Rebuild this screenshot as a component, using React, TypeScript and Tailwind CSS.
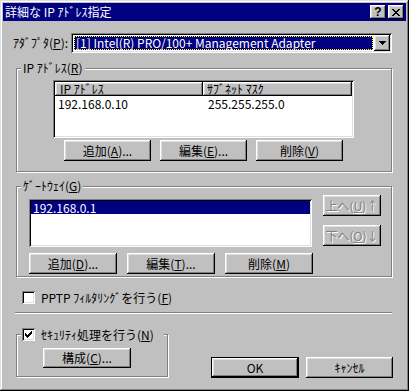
import React from "react";

const raised =
  "shadow-[inset_-1px_-1px_0_#000,inset_1px_1px_0_#fff,inset_-2px_-2px_0_#808080,inset_2px_2px_0_#dfdfdf]";
const sunken =
  "shadow-[inset_1px_1px_0_#808080,inset_-1px_-1px_0_#fff,inset_2px_2px_0_#000,inset_-2px_-2px_0_#dfdfdf]";
const etched = "border border-[#808080] shadow-[1px_1px_0_#fff,inset_1px_1px_0_#fff]";

function U({ children }: { children: React.ReactNode }) {
  return <span className="underline underline-offset-[1px]">{children}</span>;
}

function Btn({
  children,
  w,
  h = "h-[21px]",
  def = false,
  disabled = false,
}: {
  children: React.ReactNode;
  w: string;
  h?: string;
  def?: boolean;
  disabled?: boolean;
}) {
  if (def) {
    return (
      <div className={`${w} ${h} border border-black flex`}>
        <div className={`flex-1 flex items-center justify-center ${raised} bg-[#c0c0c0] leading-none`}>
          {children}
        </div>
      </div>
    );
  }
  return (
    <div
      className={`${w} ${h} flex items-center justify-center ${raised} bg-[#c0c0c0] leading-none ${
        disabled ? "text-[#808080] [text-shadow:1px_1px_0_#fff]" : ""
      }`}
    >
      {children}
    </div>
  );
}

function Check({ checked }: { checked: boolean }) {
  return (
    <div className={`w-[13px] h-[13px] bg-white ${sunken} flex items-center justify-center shrink-0`}>
      {checked && (
        <svg width="7" height="7" viewBox="0 0 7 7" shapeRendering="crispEdges">
          <rect x="6" y="0" width="1" height="1" fill="#000" />
          <rect x="5" y="1" width="2" height="1" fill="#000" />
          <rect x="0" y="2" width="1" height="1" fill="#000" />
          <rect x="4" y="2" width="3" height="1" fill="#000" />
          <rect x="0" y="3" width="2" height="1" fill="#000" />
          <rect x="3" y="3" width="3" height="1" fill="#000" />
          <rect x="0" y="4" width="5" height="1" fill="#000" />
          <rect x="1" y="5" width="3" height="1" fill="#000" />
          <rect x="2" y="6" width="1" height="1" fill="#000" />
        </svg>
      )}
    </div>
  );
}

export default function App() {
  return (
    <div
      className={`w-[409px] h-[391px] bg-[#c0c0c0] p-[3px] flex flex-col text-[12px] text-black font-['Noto_Sans_CJK_JP','Noto_Sans',sans-serif] shadow-[inset_-1px_-1px_0_#000,inset_1px_1px_0_#dfdfdf,inset_-2px_-2px_0_#808080,inset_2px_2px_0_#fff]`}
    >
      {/* Title bar */}
      <div className="h-[18px] bg-[#000080] flex items-center pl-[2px] pr-[2px]">
        <span className="text-white leading-none flex-1">詳細な IP ｱﾄﾞﾚｽ指定</span>
        <div className="flex gap-[2px]">
          <div className={`w-[16px] h-[14px] ${raised} bg-[#c0c0c0] flex items-center justify-center font-bold leading-none text-[12px] font-['Liberation_Sans',sans-serif]`}>
            ?
          </div>
          <div className={`w-[16px] h-[14px] ${raised} bg-[#c0c0c0] flex items-center justify-center`}>
            <svg width="8" height="7" viewBox="0 0 8 7" shapeRendering="crispEdges">
              <path d="M0 0h2v1H0zM6 0h2v1H6zM1 1h2v1H1zM5 1h2v1H5zM2 2h4v1H2zM3 3h2v1H3zM2 4h4v1H2zM1 5h2v1H1zM5 5h2v1H5zM0 6h2v1H0zM6 6h2v1H6z" fill="#000" />
            </svg>
          </div>
        </div>
      </div>

      {/* Adapter row */}
      <div className="mt-[12px] h-[20px] flex items-center pl-[10px]">
        <div className="w-[58px] leading-none">
          ｱﾀﾞﾌﾟﾀ(<U>P</U>):
        </div>
        <div className={`w-[321px] h-[20px] bg-white ${sunken} p-[2px] flex`}>
          <div className="flex-1 m-[1px] bg-[#000080] border border-dotted border-[#ffff00] text-white flex items-center pl-[1px] leading-none">
            [1] Intel(R) PRO/100+ Management Adapter
          </div>
          <div className={`w-[16px] h-[16px] ${raised} bg-[#c0c0c0] flex items-center justify-center`}>
            <svg width="7" height="4" viewBox="0 0 7 4" shapeRendering="crispEdges">
              <path d="M0 0h7v1H0zM1 1h5v1H1zM2 2h3v1H2zM3 3h1v1H3z" fill="#000" />
            </svg>
          </div>
        </div>
      </div>

      {/* IP address group */}
      <div className={`mt-[15px] ml-[13px] w-[376px] h-[104px] relative ${etched}`}>
        <div className="absolute left-[4px] top-[-8px] px-[2px] bg-[#c0c0c0] leading-[14px]">
          IP ｱﾄﾞﾚｽ(<U>R</U>)
        </div>
        <div className="pt-[11px] pl-[36px] flex flex-col">
          <div className={`w-[301px] h-[58px] bg-white ${sunken} p-[2px] flex flex-col`}>
            <div className="h-[14px] flex bg-[#c0c0c0]">
              <div className={`w-[148px] h-full ${raised} flex items-center pl-[5px] leading-none`}>IP ｱﾄﾞﾚｽ</div>
              <div className={`flex-1 h-full ${raised} flex items-center pl-[4px] leading-none`}>ｻﾌﾞﾈｯﾄ ﾏｽｸ</div>
            </div>
            <div className="mt-[1px] h-[13px] flex items-center leading-none">
              <div className="w-[148px] pl-[3px]">192.168.0.10</div>
              <div className="pl-[5px]">255.255.255.0</div>
            </div>
          </div>
          <div className="mt-[2px] ml-[11px] flex gap-[9px]">
            <Btn w="w-[87px]">
              追加(<U>A</U>)...
            </Btn>
            <Btn w="w-[87px]">
              編集(<U>E</U>)...
            </Btn>
            <Btn w="w-[87px]">
              削除(<U>V</U>)
            </Btn>
          </div>
        </div>
      </div>

      {/* Gateway group */}
      <div className={`mt-[14px] ml-[13px] w-[376px] h-[91px] relative ${etched}`}>
        <div className="absolute left-[4px] top-[-8px] px-[2px] bg-[#c0c0c0] leading-[14px]">
          ｹﾞｰﾄｳｪｲ(<U>G</U>)
        </div>
        <div className="pt-[8px] pl-[12px] flex">
          <div className="mt-[4px] flex flex-col">
            <div className={`w-[283px] h-[48px] bg-white ${sunken} p-[2px] flex flex-col`}>
              <div className="h-[13px] bg-[#000080] text-white flex items-center pl-[2px] leading-none">192.168.0.1</div>
            </div>
            <div className="mt-[6px] flex gap-[10px]">
              <Btn w="w-[88px]">
                追加(<U>D</U>)...
              </Btn>
              <Btn w="w-[88px]">
                編集(<U>T</U>)...
              </Btn>
              <Btn w="w-[88px]">
                削除(<U>M</U>)
              </Btn>
            </div>
          </div>
          <div className="ml-[10px] flex flex-col gap-[9px]">
            <Btn w="w-[58px]" disabled>
              上へ(<U>U</U>)↑
            </Btn>
            <Btn w="w-[58px]" disabled>
              下へ(<U>O</U>)↓
            </Btn>
          </div>
        </div>
      </div>

      {/* PPTP */}
      <div className="mt-[14px] ml-[19px] h-[13px] flex items-center">
        <Check checked={false} />
        <span className="ml-[6px] leading-none">
          PPTP ﾌｨﾙﾀﾘﾝｸﾞを行う(<U>F</U>)
        </span>
      </div>

      {/* Separator */}
      <div className="mt-[8px] ml-[12px] w-[377px] h-[2px] border-t border-t-[#808080] border-b border-b-white" />

      {/* Bottom row */}
      <div className="mt-[20px] flex items-start">
        <div className={`ml-[13px] w-[152px] h-[43px] relative ${etched}`}>
          <div className="absolute left-[4px] top-[-7px] pl-[1px] pr-[10px] bg-[#c0c0c0] flex items-center h-[13px]">
            <Check checked={true} />
            <span className="ml-[6px] leading-none">
              ｾｷｭﾘﾃｨ処理を行う(<U>N</U>)
            </span>
          </div>
          <div className="mt-[13px] ml-[26px]">
            <Btn w="w-[88px]" h="h-[20px]">
              構成(<U>C</U>)...
            </Btn>
          </div>
        </div>
        <div className="ml-[43px] mt-[23px] flex gap-[7px]">
          <Btn w="w-[88px]" def>
            OK
          </Btn>
          <Btn w="w-[87px]">ｷｬﾝｾﾙ</Btn>
        </div>
      </div>
    </div>
  );
}
